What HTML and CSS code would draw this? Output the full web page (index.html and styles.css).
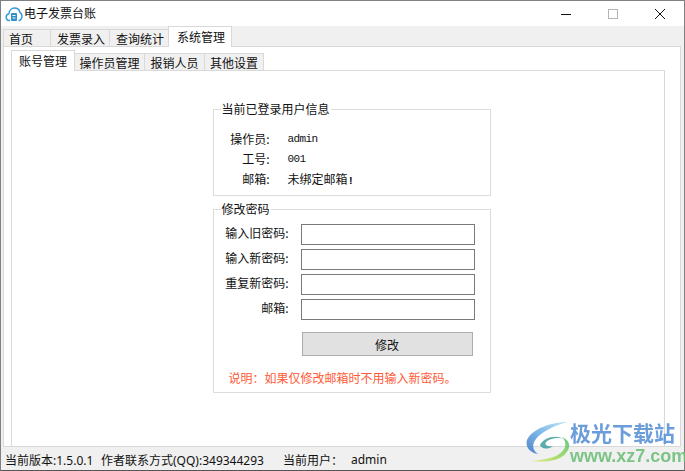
FILE: index.html
```html
<!DOCTYPE html>
<html lang="zh-CN">
<head>
  <meta charset="UTF-8">
  <title>电子发票台账</title>
  <link rel="stylesheet" href="styles.css">
</head>
<body>
  <div class="window">
    <div class="titlebar">
      <svg class="app-icon" width="18" height="18" viewBox="0 0 18 18">
        <path d="M5 15.500H4.200C2 15.500 1 13.500 1.200 11.800C1.400 10 2.500 9 3.800 8.800C4.200 5.500 6.500 3 9.500 3C12.500 3 14.500 5 15 7.500C16.300 8.200 17 9.500 17 11C17 13.500 15.500 15.500 13.500 15.500" fill="none" stroke="#2f9bd8" stroke-width="1.500"/>
        <rect x="6" y="8" width="6" height="8" rx="1" fill="#2f8fc8"/>
        <rect x="7.500" y="10" width="3" height="1" fill="#fff"/>
        <rect x="7.500" y="12.500" width="3" height="1" fill="#fff"/>
      </svg>
      <span class="title">电子发票台账</span>
      <div class="controls">
        <svg width="12" height="12" viewBox="0 0 12 12"><rect x="1" y="6" width="10" height="1" fill="#111"/></svg>
        <svg width="12" height="12" viewBox="0 0 12 12"><rect x="1.500" y="1.500" width="9" height="9" fill="none" stroke="#b4b4b4"/></svg>
        <svg width="12" height="12" viewBox="0 0 12 12"><path d="M1 1L11 11M11 1L1 11" stroke="#111" fill="none"/></svg>
      </div>
    </div>

    <div class="tabs outer-tabs">
      <div class="tab tab-home">首页</div>
      <div class="tab tab-60">发票录入</div>
      <div class="tab tab-60">查询统计</div>
      <div class="tab tab-64 active">系统管理</div>
    </div>

    <div class="outer-page">
      <div class="tabs inner-tabs">
        <div class="tab tab-64 active">账号管理</div>
        <div class="tab tab-71">操作员管理</div>
        <div class="tab tab-61">报销人员</div>
        <div class="tab tab-60">其他设置</div>
      </div>
      <div class="inner-page">
        <fieldset class="group info-group">
          <legend>当前已登录用户信息</legend>
          <div class="info-row"><span class="info-label">操作员:</span><span class="mono">admin</span></div>
          <div class="info-row"><span class="info-label">工号:</span><span class="mono">001</span></div>
          <div class="info-row"><span class="info-label">邮箱:</span><span>未绑定邮箱<b class="mono">!</b></span></div>
        </fieldset>

        <fieldset class="group pwd-group">
          <legend>修改密码</legend>
          <div class="form-row"><label>输入旧密码:</label><input type="password"></div>
          <div class="form-row"><label>输入新密码:</label><input type="password"></div>
          <div class="form-row"><label>重复新密码:</label><input type="password"></div>
          <div class="form-row"><label>邮箱:</label><input type="text"></div>
          <button class="submit">修改</button>
          <p class="note">说明：如果仅修改邮箱时不用输入新密码。</p>
        </fieldset>
      </div>
    </div>

    <div class="statusbar">
      <span>当前版本:1.5.0.1</span>
      <span>作者联系方式(QQ):349344293</span>
      <span>当前用户：</span>
      <span>admin</span>
    </div>

    <div class="watermark">
      <svg width="44" height="42" viewBox="0 0 44 42">
        <defs>
          <linearGradient id="wm-blue" x1="1" y1="0" x2="0" y2="1">
            <stop offset="0" stop-color="#bfe6f5"/>
            <stop offset="0.5" stop-color="#6fb2e6"/>
            <stop offset="1" stop-color="#3f78c8"/>
          </linearGradient>
          <linearGradient id="wm-green" x1="1" y1="0" x2="0" y2="1">
            <stop offset="0" stop-color="#57c27a"/>
            <stop offset="0.6" stop-color="#a6dc5c"/>
            <stop offset="1" stop-color="#e4ee9a"/>
          </linearGradient>
        </defs>
        <path d="M42 1C25 1 6 8 1 19C-1 26 4 32 12 33C6 29 6 23 10 18C16 10 30 4 42 1Z" fill="url(#wm-blue)"/>
        <path d="M14 24C17 17 30 13 37 18C33 16 24 17 20 21C18 24 22 26 27 25C22 29 15 28 14 24Z" fill="#4aa6a0"/>
        <path d="M36 16C42 22 40 30 30 35C23 38 14 39 5 40C18 42 34 40 40 32C46 25 43 19 36 16Z" fill="url(#wm-green)"/>
      </svg>
      <div class="wm-text">
        <div class="wm-name">极光下载站</div>
        <div class="wm-url">www.xz7.com</div>
      </div>
    </div>
  </div>
</body>
</html>
```

FILE: styles.css
```css
html, body {
  margin: 0;
  height: 100%;
  overflow: hidden;
}

body {
  font-family: "Noto Sans CJK SC", "Liberation Sans", sans-serif;
  font-size: 12px;
  color: #111;
  background: #f0f0f0;
}

.window {
  position: relative;
  height: 471px;
  box-sizing: border-box;
  border: 1px solid #808080;
  border-bottom-color: #555;
  display: flex;
  flex-direction: column;
  background: #f0f0f0;
}

.titlebar {
  height: 25px;
  flex: none;
  background: #fff;
  display: flex;
  align-items: center;
  padding-left: 4px;
}

.title {
  margin-left: 1px;
  padding-bottom: 2px;
}

.app-icon {
  flex: none;
}

.controls {
  margin-left: auto;
  display: flex;
  gap: 35px;
  padding-right: 18px;
}

.tabs {
  display: flex;
  flex: none;
}

.outer-tabs {
  height: 20px;
  padding-left: 2px;
  align-items: flex-end;
}

.outer-tabs .tab-60,
.outer-tabs .tab-64 {
  padding-left: 2px;
}

.inner-tabs {
  height: 23px;
  box-sizing: border-box;
  align-items: flex-end;
}

.tab {
  height: 17px;
  box-sizing: border-box;
  border: 1px solid #d9d9d9;
  border-bottom: none;
  margin-right: -1px;
  background: #f0f0f0;
  text-align: center;
  line-height: 17px;
  flex: none;
}

.tab.active {
  height: 21px;
  line-height: 19px;
  background: #fff;
  position: relative;
  z-index: 1;
  margin-bottom: -1px;
}

.tab-home {
  width: 48px;
  text-align: left;
  padding-left: 5px;
}

.tab-60 { width: 60px; }
.tab-61 { width: 61px; }
.tab-64 { width: 64px; }
.tab-71 { width: 71px; }

.outer-page {
  flex: none;
  height: 401px;
  margin: 0 3px 0 2px;
  box-sizing: border-box;
  border: 1px solid #d9d9d9;
  background: #fff;
  display: flex;
  flex-direction: column;
  padding: 0 15px 0 7px;
}

.inner-page {
  flex: 1;
  border: 1px solid #d9d9d9;
  border-bottom: none;
  display: flex;
  flex-direction: column;
  align-items: center;
  padding: 31px 0 0 27px;
}

.group {
  width: 278px;
  box-sizing: border-box;
  margin: 0;
  min-width: 0;
  border: 1px solid #dcdcdc;
  padding: 0;
}

.group legend {
  margin-left: 7px;
  padding: 0 1px;
  line-height: 14px;
  height: 14px;
}

.info-group {
  height: 94px;
  padding-top: 13px;
}

.info-row {
  display: flex;
  height: 20px;
  line-height: 20px;
}

.info-label {
  width: 56px;
  text-align: right;
  margin-right: 18px;
}

.mono {
  font-family: "Liberation Mono", monospace;
  font-size: 11px;
  letter-spacing: -0.6px;
}

.pwd-group {
  height: 191px;
  margin-top: 6px;
  padding-top: 6px;
}

.form-row {
  display: flex;
  align-items: center;
  height: 25px;
}

.form-row label {
  width: 75px;
  text-align: right;
  margin-right: 12px;
  padding-bottom: 5px;
}

.form-row input {
  width: 174px;
  height: 21px;
  box-sizing: border-box;
  border: 1px solid #7a7a7a;
  background: #fff;
  padding: 0;
  margin: 0;
  border-radius: 0;
}

.submit {
  display: block;
  width: 171px;
  height: 24px;
  margin: 10px 0 0 88px;
  box-sizing: border-box;
  border: 1px solid #adadad;
  background: #e1e1e1;
  border-radius: 0;
  font: inherit;
  color: #111;
  padding: 0;
}

.note {
  margin: 15px 0 0 15px;
  line-height: 14px;
  color: #ff5a36;
}

.statusbar {
  flex: 1;
  display: flex;
  align-items: center;
  padding: 2px 0 0 4px;
  font-family: "Noto Sans", "Noto Sans CJK SC", sans-serif;
}

.statusbar span:nth-child(1) { width: 96px; }
.statusbar span:nth-child(2) { width: 182px; }
.statusbar span:nth-child(3) { width: 68px; }

.watermark {
  position: absolute;
  left: 525px;
  top: 420px;
  display: flex;
  opacity: 0.9;
  filter: blur(0.3px);
}

.wm-text {
  margin-top: -1px;
}

.wm-name {
  font-size: 21px;
  font-weight: 700;
  line-height: 24px;
  color: #5b93d6;
  white-space: nowrap;
}

.wm-url {
  margin-top: 2px;
  font-family: "Liberation Sans", sans-serif;
  font-size: 18px;
  font-weight: 700;
  line-height: 20px;
  color: #6fc07a;
  white-space: nowrap;
}
```
